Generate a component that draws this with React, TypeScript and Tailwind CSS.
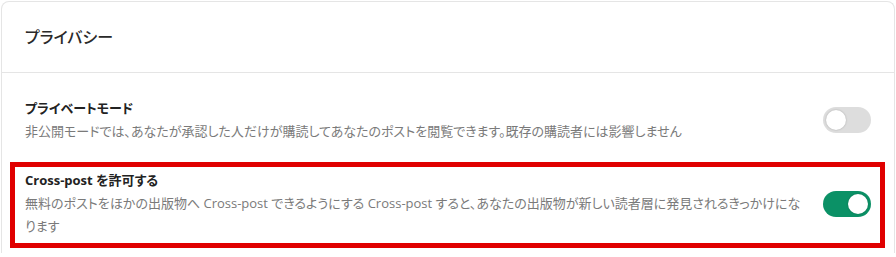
import { useState } from "react";

function Toggle({ on, onChange }: { on: boolean; onChange: () => void }) {
  return (
    <button
      type="button"
      role="switch"
      aria-checked={on}
      onClick={onChange}
      className={`relative h-[26px] w-12 shrink-0 rounded-full transition-colors ${
        on ? "bg-[#0b9166]" : "bg-[#dddddd]"
      }`}
    >
      <span
        className={`absolute top-[3px] h-5 w-5 rounded-full bg-white shadow-[0_0_2px_rgba(0,0,0,0.25)] transition-all ${
          on ? "left-[25px]" : "left-[3px]"
        }`}
      />
    </button>
  );
}

export default function App() {
  const [privateMode, setPrivateMode] = useState(false);
  const [crossPost, setCrossPost] = useState(true);

  return (
    <div className="min-h-screen bg-white pl-px pt-px font-['Open_Sans','Noto_Sans_CJK_JP',sans-serif] [font-feature-settings:'palt']">
      <div className="w-[894px] rounded-t-lg border border-b-0 border-[#e5e5e5]">
        {/* Header */}
        <div className="flex h-[70px] items-center px-[23px]">
          <h2 className="text-[16px] font-medium text-[#2a2a2a]">プライバシー</h2>
        </div>
        <div className="border-t border-[#e5e5e5]" />

        {/* Settings */}
        <div className="flex items-center gap-4 px-[23px] pb-[14px] pt-6">
          <div className="flex-1">
            <div className="text-[13px] font-bold leading-[23px] text-[#222222]">
              プライベートモード
            </div>
            <p className="text-[13px] leading-[23px] text-[#7a7a7a]">
              非公開モードでは、あなたが承認した人だけが購読してあなたのポストを閲覧できます。既存の購読者には影響しません
            </p>
          </div>
          <Toggle on={privateMode} onChange={() => setPrivateMode(!privateMode)} />
        </div>

        <div className="relative flex items-center gap-4 px-[23px] pb-[15px] pt-3">
          <div className="flex-1">
            <div className="text-[13px] font-bold leading-[23px] text-[#222222]">
              Cross-post を許可する
            </div>
            <p className="text-[13px] leading-[23px] text-[#7a7a7a]">
              無料のポストをほかの出版物へ Cross-post できるようにする Cross-post すると、あなたの出版物が新しい読者層に発見されるきっかけになります
            </p>
          </div>
          <Toggle on={crossPost} onChange={() => setCrossPost(!crossPost)} />
          {/* annotation */}
          <div className="pointer-events-none absolute bottom-[5px] left-2 right-[9px] top-[5px] border-[5px] border-[#e00000]" />
        </div>
      </div>
    </div>
  );
}
